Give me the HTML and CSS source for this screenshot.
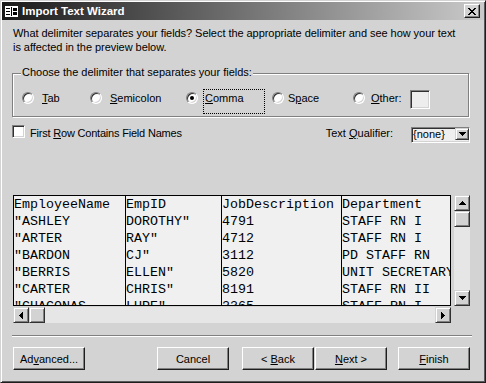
FILE: index.html
```html
<!DOCTYPE html>
<html lang="en">
<head>
    <meta charset="UTF-8">
    <title>Import Text Wizard</title>
    <link rel="stylesheet" href="styles.css">
</head>
<body>
    <div class="window">
        <div class="titlebar">
            <svg class="app-icon" width="13" height="11" viewBox="0 0 13 11">
                <rect x="0" y="0" width="13" height="11" fill="#fff"/>
                <path d="M1 2h4v1h-4z M1 5h4v1h-4z M1 8h4v1h-4z M6 1h1v9h-1z M8 2h4v3h-4z M8 6h4v3h-4z" fill="#000"/>
            </svg>
            <span class="title">Import Text Wizard</span>
            <div class="close-btn">
                <svg width="8" height="7" viewBox="0 0 8 7">
                    <path d="M0 0h2v1h-2z M6 0h2v1h-2z M1 1h2v1h-2z M5 1h2v1h-2z M2 2h4v1h-4z M3 3h2v1h-2z M2 4h4v1h-4z M1 5h2v1h-2z M5 5h2v1h-2z M0 6h2v1h-2z M6 6h2v1h-2z" fill="#000"/>
                </svg>
            </div>
        </div>

        <div class="content">
            <p class="intro">What delimiter separates your fields? Select the appropriate delimiter and see how your text<br>is affected in the preview below.</p>

            <div class="group">
                <span class="group-label">Choose the delimiter that separates your fields:</span>
                <div class="opt-row">
                    <div class="opt opt-tab">
                        <span class="radio"></span>
                        <span class="opt-label"><u>T</u>ab</span>
                    </div>
                    <div class="opt opt-semi">
                        <span class="radio"></span>
                        <span class="opt-label"><u>S</u>emicolon</span>
                    </div>
                    <div class="opt opt-comma">
                        <span class="radio checked"></span>
                        <span class="opt-label focused"><u>C</u>omma</span>
                    </div>
                    <div class="opt opt-space">
                        <span class="radio"></span>
                        <span class="opt-label">S<u>p</u>ace</span>
                    </div>
                    <div class="opt opt-other">
                        <span class="radio"></span>
                        <span class="opt-label"><u>O</u>ther:</span>
                        <span class="other-box sunken"></span>
                    </div>
                </div>
            </div>

            <div class="check-row">
                <span class="checkbox sunken"></span>
                <span class="check-label">First <u>R</u>ow Contains Field Names</span>
                <span class="qualifier-label">Text <u>Q</u>ualifier:</span>
                <div class="combo sunken">
                    <span class="combo-text">{none}</span>
                    <span class="combo-btn raised">
                        <svg width="7" height="4" viewBox="0 0 7 4"><path d="M0 0h7v1h-7z M1 1h5v1h-5z M2 2h3v1h-3z M3 3h1v1h-1z" fill="#000"/></svg>
                    </span>
                </div>
            </div>

            <div class="preview">
                <div class="preview-top">
                    <div class="grid">
                        <div class="col col-name">
                            <div class="cell">EmployeeName</div>
                            <div class="cell">&quot;ASHLEY</div>
                            <div class="cell">&quot;ARTER</div>
                            <div class="cell">&quot;BARDON</div>
                            <div class="cell">&quot;BERRIS</div>
                            <div class="cell">&quot;CARTER</div>
                            <div class="cell">&quot;CHACONAS</div>
                        </div>
                        <div class="col col-id">
                            <div class="cell">EmpID</div>
                            <div class="cell">DOROTHY&quot;</div>
                            <div class="cell">RAY&quot;</div>
                            <div class="cell">CJ&quot;</div>
                            <div class="cell">ELLEN&quot;</div>
                            <div class="cell">CHRIS&quot;</div>
                            <div class="cell">LUPE&quot;</div>
                        </div>
                        <div class="col col-job">
                            <div class="cell">JobDescription</div>
                            <div class="cell">4791</div>
                            <div class="cell">4712</div>
                            <div class="cell">3112</div>
                            <div class="cell">5820</div>
                            <div class="cell">8191</div>
                            <div class="cell">2365</div>
                        </div>
                        <div class="col col-dept">
                            <div class="cell">Department</div>
                            <div class="cell">STAFF RN I</div>
                            <div class="cell">STAFF RN I</div>
                            <div class="cell">PD STAFF RN</div>
                            <div class="cell">UNIT SECRETARY</div>
                            <div class="cell">STAFF RN II</div>
                            <div class="cell">STAFF RN I</div>
                        </div>
                    </div>

                    <div class="vscroll">
                        <span class="sb-btn raised">
                            <svg width="7" height="4" viewBox="0 0 7 4"><path d="M3 0h1v1h-1z M2 1h3v1h-3z M1 2h5v1h-5z M0 3h7v1h-7z" fill="#000"/></svg>
                        </span>
                        <span class="sb-thumb raised"></span>
                        <span class="sb-track"></span>
                        <span class="sb-btn raised">
                            <svg width="7" height="4" viewBox="0 0 7 4"><path d="M0 0h7v1h-7z M1 1h5v1h-5z M2 2h3v1h-3z M3 3h1v1h-1z" fill="#000"/></svg>
                        </span>
                    </div>
                </div>

                <div class="hscroll">
                    <span class="sb-btn raised">
                        <svg width="4" height="7" viewBox="0 0 4 7"><path d="M3 0h1v7h-1z M2 1h1v5h-1z M1 2h1v3h-1z M0 3h1v1h-1z" fill="#000"/></svg>
                    </span>
                    <span class="sb-thumb raised"></span>
                    <span class="sb-track"></span>
                    <span class="sb-btn raised">
                        <svg width="4" height="7" viewBox="0 0 4 7"><path d="M0 0h1v7h-1z M1 1h1v5h-1z M2 2h1v3h-1z M3 3h1v1h-1z" fill="#000"/></svg>
                    </span>
                </div>
            </div>

            <div class="separator"></div>

            <div class="buttons">
                <div class="btn btn-advanced"><span>Ad<u>v</u>anced...</span></div>
                <div class="btn btn-cancel"><span>Cancel</span></div>
                <div class="btn btn-back"><span>&lt; <u>B</u>ack</span></div>
                <div class="btn btn-next"><span><u>N</u>ext &gt;</span></div>
                <div class="btn btn-finish"><span><u>F</u>inish</span></div>
            </div>
        </div>
    </div>
</body>
</html>
```

FILE: styles.css
```css
* {
    box-sizing: border-box;
}

body {
    margin: 0;
    background-color: #d3d3d3;
    font-family: "Liberation Sans", Arial, sans-serif;
    font-size: 11px;
    color: #000;
}

.window {
    width: 486px;
    height: 383px;
    padding: 1px;
    border: 1px solid;
    border-color: #d3d3d3 #1e1e1e #1e1e1e #d3d3d3;
    box-shadow: inset 1px 1px 0 #fff, inset -1px -1px 0 #5a5a5a;
    background-color: #d3d3d3;
}

/* caption */
.titlebar {
    height: 18px;
    display: flex;
    align-items: center;
    padding-left: 3px;
    background: linear-gradient(to right, #1a1a1a, #cacaca);
}

.app-icon {
    margin-right: 4px;
    flex: none;
}

.title {
    color: #fff;
    font-weight: bold;
    font-size: 11.5px;
}

.close-btn {
    margin-left: auto;
    margin-right: 4px;
    width: 16px;
    height: 14px;
    display: flex;
    align-items: center;
    justify-content: center;
    background-color: #d3d3d3;
    border: 1px solid;
    border-color: #fff #1e1e1e #1e1e1e #fff;
    box-shadow: inset -1px -1px 0 #808080;
}

/* 3d helpers */
.raised {
    background-color: #d3d3d3;
    border: 1px solid;
    border-color: #d3d3d3 #303030 #303030 #d3d3d3;
    box-shadow: inset 1px 1px 0 #fff, inset -1px -1px 0 #808080;
}

.sunken {
    border: 1px solid;
    border-color: #808080 #fff #fff #808080;
    box-shadow: inset 1px 1px 0 #303030, inset -1px -1px 0 #d3d3d3;
}

.content {
    padding: 6px 14px 0 10px;
}

.intro {
    margin: 0 0 0 1px;
    line-height: 14px;
    white-space: nowrap;
    letter-spacing: -0.05px;
}

/* delimiter group */
.group {
    position: relative;
    margin: 19px 1px 0 0;
    padding: 15px 0 2px 9px;
    border: 1px solid #808080;
    box-shadow: 1px 1px 0 #fff, inset 1px 1px 0 #fff;
}

.group-label {
    position: absolute;
    top: -8px;
    left: 8px;
    padding: 0 1px;
    line-height: 13px;
    background-color: #d3d3d3;
}

.opt-row {
    display: flex;
    height: 25px;
}

.opt {
    display: flex;
    align-items: flex-start;
    flex: none;
}

.opt-tab { width: 68px; }
.opt-semi { width: 96px; }
.opt-comma { width: 86px; }
.opt-space { width: 81px; }

.radio {
    position: relative;
    width: 12px;
    height: 12px;
    margin-top: 3px;
    flex: none;
    border-radius: 50%;
    background-color: #fff;
    border: 1px solid;
    border-color: #808080 #fff #fff #808080;
    box-shadow: inset 1px 1px 0 #303030, inset -1px -1px 0 #d3d3d3;
}

.radio.checked::after {
    content: "";
    position: absolute;
    left: 3px;
    top: 3px;
    width: 4px;
    height: 4px;
    border-radius: 50%;
    background-color: #000;
}

.opt-label {
    margin: 3px 0 0 8px;
    line-height: 13px;
    white-space: nowrap;
}

.opt-label.focused {
    margin: 0 0 0 5px;
    width: 62px;
    height: 25px;
    padding: 2px 0 0 1px;
    border: 1px dotted #000;
}

.opt-space .opt-label {
    margin-left: 4px;
}

.opt-other .opt-label {
    margin-left: 6px;
}

.other-box {
    width: 20px;
    height: 19px;
    margin: 1px 0 0 8px;
    background-color: #ededed;
}

/* first row + qualifier */
.check-row {
    display: flex;
    align-items: flex-start;
    height: 18px;
    margin-top: 8px;
}

.checkbox {
    width: 13px;
    height: 13px;
    background-color: #fff;
}

.check-label {
    margin: 2px 0 0 5px;
    line-height: 13px;
    letter-spacing: -0.2px;
}

.qualifier-label {
    margin: 2px 18px 0 auto;
    line-height: 13px;
}

.combo {
    width: 59px;
    height: 16px;
    margin-top: 2px;
    display: flex;
    background-color: #efefef;
}

.combo-text {
    flex: 1;
    padding-left: 1px;
    line-height: 12px;
}

.combo-btn {
    width: 14px;
    height: 12px;
    display: flex;
    align-items: center;
    justify-content: center;
}

/* preview grid */
.preview {
    margin: 52px 0 0 1px;
}

.preview-top {
    display: flex;
    height: 111px;
}

.grid {
    width: 438px;
    display: flex;
    overflow: hidden;
    border: 1px solid #000;
    background-color: #f0f0f0;
    font-family: "Liberation Mono", "Courier New", monospace;
    font-size: 13.333px;
    line-height: 17px;
}

.col {
    flex: none;
    overflow: hidden;
    border-right: 1px solid #000;
}

.col-name { width: 112px; }
.col-id { width: 96px; }
.col-job { width: 120px; }

.col-dept {
    flex: 1;
    border-right: none;
}

.cell {
    height: 17px;
    white-space: pre;
}

.vscroll {
    width: 16px;
    margin-left: 3px;
    display: flex;
    flex-direction: column;
    background-color: #e6e6e6;
}

.hscroll {
    width: 438px;
    height: 16px;
    margin-top: 1px;
    display: flex;
    background-color: #e6e6e6;
}

.sb-btn {
    width: 16px;
    height: 16px;
    flex: none;
    display: flex;
    align-items: center;
    justify-content: center;
}

.sb-thumb {
    width: 16px;
    height: 16px;
    flex: none;
}

.sb-track {
    flex: 1;
}

.separator {
    margin: 12px -2px 0 0;
    border-top: 1px solid #808080;
    border-bottom: 1px solid #fff;
}

/* wizard buttons */
.buttons {
    display: flex;
    margin-top: 10px;
    padding-left: 1px;
}

.btn {
    width: 72px;
    height: 23px;
    display: flex;
    align-items: center;
    justify-content: center;
    background-color: #d3d3d3;
    border: 1px solid;
    border-color: #fff #1e1e1e #1e1e1e #fff;
    box-shadow: inset -1px -1px 0 #808080;
    white-space: nowrap;
}

.btn-cancel { margin-left: 72px; }
.btn-back { margin-left: 13px; }
.btn-next { margin-left: 1px; }
.btn-finish { margin-left: 11px; }
```
